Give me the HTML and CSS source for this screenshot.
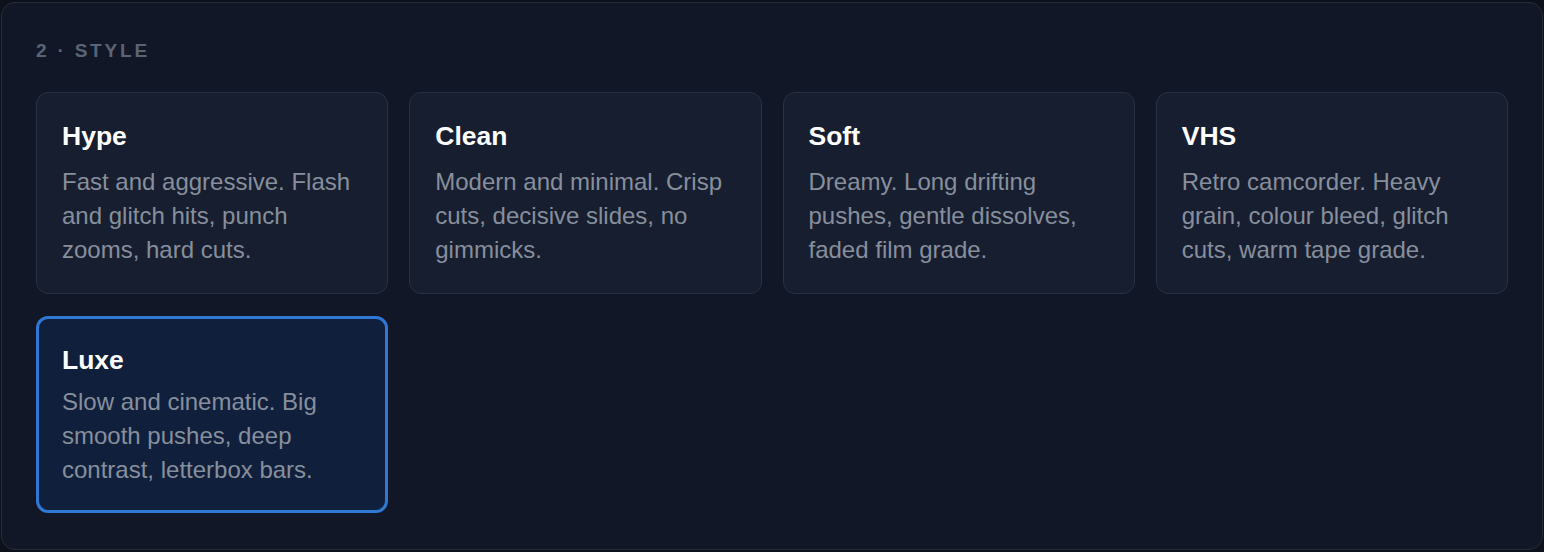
FILE: index.html
```html
<!DOCTYPE html>
<html lang="en">
<head>
    <meta charset="UTF-8">
    <meta name="viewport" content="width=device-width, initial-scale=1.0">
    <title>Style</title>
    <link rel="stylesheet" href="styles.css">
</head>
<body>
    <div class="panel">
        <div class="step-title">2 · Style</div>

        <div class="style-grid">
            <div class="style-card">
                <h3>Hype</h3>
                <p>Fast and aggressive. Flash and glitch hits, punch zooms, hard cuts.</p>
            </div>
            <div class="style-card">
                <h3>Clean</h3>
                <p>Modern and minimal. Crisp cuts, decisive slides, no gimmicks.</p>
            </div>
            <div class="style-card">
                <h3>Soft</h3>
                <p>Dreamy. Long drifting pushes, gentle dissolves, faded film grade.</p>
            </div>
            <div class="style-card">
                <h3>VHS</h3>
                <p>Retro camcorder. Heavy grain, colour bleed, glitch cuts, warm tape grade.</p>
            </div>
            <div class="style-card selected">
                <h3>Luxe</h3>
                <p>Slow and cinematic. Big smooth pushes, deep contrast, letterbox bars.</p>
            </div>
        </div>
    </div>
</body>
</html>
```

FILE: styles.css
```css
html, body {
    height: 100%;
}
body {
    font-family: "Liberation Sans", Arial, sans-serif;
    background-color: #0c111c;
    margin: 0;
    padding: 2px 1px 2px 1px;
    box-sizing: border-box;
}
.panel {
    background-color: #111726;
    border: 1px solid #262d3b;
    border-radius: 14px;
    padding: 36px 34px 36px 34px;
    height: 100%;
    box-sizing: border-box;
}
.step-title {
    color: #5b6474;
    font-size: 19px;
    font-weight: bold;
    line-height: 24px;
    letter-spacing: 2.8px;
    text-transform: uppercase;
    margin-bottom: 29px;
}
.style-grid {
    display: grid;
    grid-template-columns: repeat(4, 1fr);
    gap: 22px 21px;
}
.style-card {
    background-color: #171e2f;
    border: 1px solid #283043;
    border-radius: 12px;
    padding: 26px 25px 26px 25px;
    cursor: pointer;
}
.style-card h3 {
    color: #ffffff;
    font-size: 26.5px;
    line-height: 34px;
    margin: 0 0 12px 0;
}
.style-card p {
    color: #878f9d;
    font-size: 24px;
    line-height: 34px;
    margin: 0;
}
.style-card.selected {
    background-color: #101f3b;
    border: 3px solid #2f78d4;
    padding: 24px 23px 23px 23px;
}
.style-card.selected h3 {
    margin-bottom: 8px;
}
```
